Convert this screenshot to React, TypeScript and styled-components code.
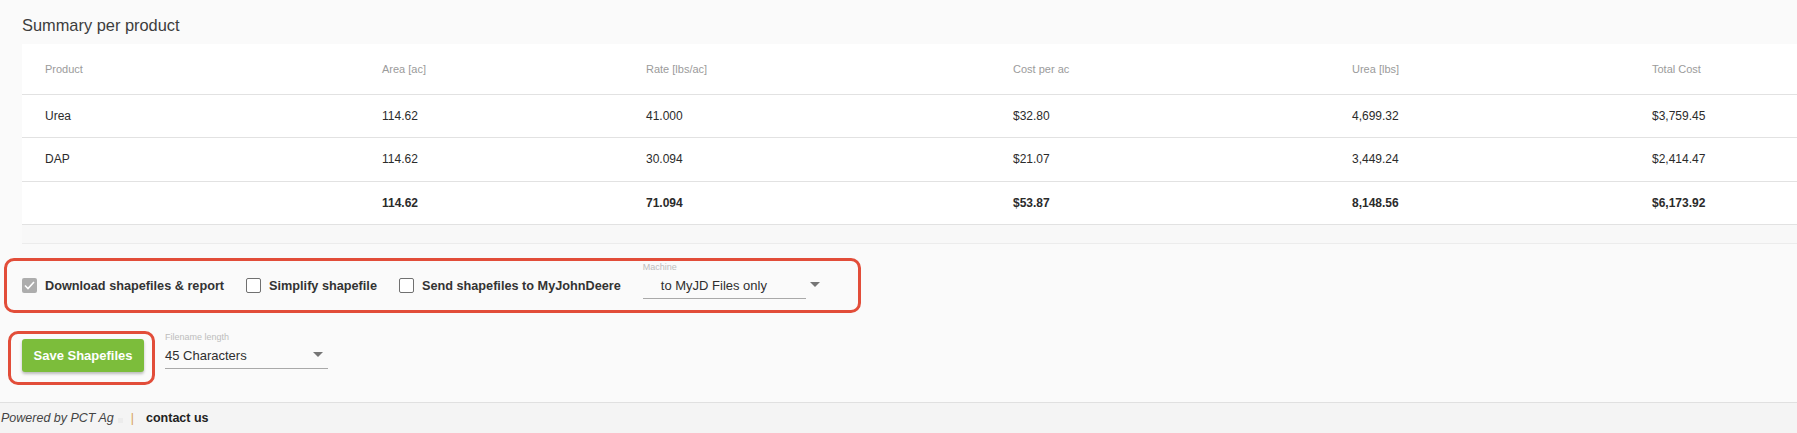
import React from "react";
import styled, { createGlobalStyle } from "styled-components";

interface Row {
  product: string;
  area: string;
  rate: string;
  costPerAc: string;
  urea: string;
  total: string;
}

const rows: Row[] = [
  { product: "Urea", area: "114.62", rate: "41.000", costPerAc: "$32.80", urea: "4,699.32", total: "$3,759.45" },
  { product: "DAP", area: "114.62", rate: "30.094", costPerAc: "$21.07", urea: "3,449.24", total: "$2,414.47" },
];

const totals: Row = {
  product: "",
  area: "114.62",
  rate: "71.094",
  costPerAc: "$53.87",
  urea: "8,148.56",
  total: "$6,173.92",
};

const columns = [
  { label: "Product", width: 337 },
  { label: "Area [ac]", width: 264 },
  { label: "Rate [lbs/ac]", width: 367 },
  { label: "Cost per ac", width: 339 },
  { label: "Urea [lbs]", width: 300 },
  { label: "Total Cost", width: 168 },
];

const GlobalStyle = createGlobalStyle`
  * { box-sizing: border-box; }
  body {
    margin: 0;
    background: #fafafa;
    font-family: "Liberation Sans", Arial, sans-serif;
    color: #333;
  }
`;

const Page = styled.div`
  min-height: 100vh;
  display: flex;
  flex-direction: column;
`;

const Main = styled.main`
  flex: 1;
`;

const Heading = styled.h2`
  margin: 0 0 9px;
  padding: 15px 0 0 22px;
  font-size: 16.4px;
  line-height: 20px;
  font-weight: normal;
  color: #3d3d3d;
`;

const Card = styled.div`
  margin-left: 22px;
  background: #f8f8f8;
  border-bottom: 1px solid #ececec;
  padding-bottom: 18px;
`;

const Table = styled.table`
  width: 100%;
  table-layout: fixed;
  border-collapse: collapse;
  background: #fff;
`;

const HeadCell = styled.th`
  height: 50px;
  padding: 0 0 0 23px;
  text-align: left;
  font-size: 11px;
  font-weight: normal;
  color: #9b9b9b;
  border-bottom: 1px solid #e2e2e2;
`;

const Cell = styled.td<{ $bold?: boolean }>`
  height: 43.5px;
  padding: 0 0 0 23px;
  font-size: 12px;
  color: #2b2b2b;
  font-weight: ${(p) => (p.$bold ? "bold" : "normal")};
  border-bottom: 1px solid #e2e2e2;
`;

const Highlight = styled.div`
  display: inline-flex;
  align-items: center;
  border: 3px solid #e24d39;
  border-radius: 10px;
`;

const OptionsBox = styled(Highlight)`
  margin: 14px 0 0 4px;
  height: 55px;
  padding: 0 52px 0 15px;
  gap: 22px;
`;

const CheckItem = styled.label`
  display: flex;
  align-items: center;
  gap: 8px;
  font-size: 12.7px;
  font-weight: bold;
  color: #333;
`;

const Box = styled.span<{ $checked?: boolean }>`
  width: 15px;
  height: 15px;
  border-radius: 2px;
  display: flex;
  align-items: center;
  justify-content: center;
  background: ${(p) => (p.$checked ? "#adadad" : "#fff")};
  border: ${(p) => (p.$checked ? "none" : "1.5px solid #707070")};
`;

const SelectField = styled.div<{ $width: number }>`
  position: relative;
  width: ${(p) => p.$width}px;
  align-self: flex-start;
  margin-top: 1px;
`;

const SelectLabel = styled.div`
  font-size: 9px;
  line-height: 11px;
  color: #bdbdbd;
`;

const SelectValue = styled.div<{ $indent: number }>`
  margin-top: 5px;
  padding: 0 0 4px ${(p) => p.$indent}px;
  font-size: 13px;
  line-height: 16px;
  color: #2f2f2f;
  border-bottom: 1px solid #a9a9a9;
`;

const Arrow = styled.span<{ $right: number }>`
  position: absolute;
  right: ${(p) => p.$right}px;
  bottom: 12px;
  width: 0;
  height: 0;
  border-left: 5px solid transparent;
  border-right: 5px solid transparent;
  border-top: 5px solid #757575;
`;

const ActionRow = styled.div`
  display: flex;
  align-items: flex-start;
  gap: 10px;
  margin: 18px 0 0 8px;
`;

const ButtonBox = styled(Highlight)`
  padding: 5px 8px 10px 11px;
`;

const SaveButton = styled.button`
  width: 122px;
  height: 33px;
  border: none;
  border-radius: 3px;
  background: #7cbd3b;
  color: #fff;
  font-family: inherit;
  font-size: 13px;
  font-weight: bold;
  box-shadow: 0 2px 3px rgba(0, 0, 0, 0.25);
  cursor: pointer;
`;

const Footer = styled.footer`
  height: 31px;
  display: flex;
  align-items: center;
  padding-left: 1px;
  background: #f4f4f4;
  border-top: 1px solid #e0e0e0;
  font-size: 12.5px;
`;

const Powered = styled.span`
  font-style: italic;
  color: #444;
`;

const Dot = styled.span`
  width: 5px;
  height: 5px;
  margin: 4px 0 0 4px;
  background: #ececec;
`;

const Divider = styled.span`
  margin: 0 12px 0 8px;
  color: #d9a35f;
`;

const Contact = styled.a`
  font-weight: bold;
  color: #222;
  text-decoration: none;
`;

const Check = () => (
  <svg width="11" height="9" viewBox="0 0 11 9">
    <path d="M1 4.5 L4 7.5 L10 1" fill="none" stroke="#fff" strokeWidth="1.6" />
  </svg>
);

const renderRow = (r: Row, bold = false) => (
  <>
    <Cell $bold={bold}>{r.product}</Cell>
    <Cell $bold={bold}>{r.area}</Cell>
    <Cell $bold={bold}>{r.rate}</Cell>
    <Cell $bold={bold}>{r.costPerAc}</Cell>
    <Cell $bold={bold}>{r.urea}</Cell>
    <Cell $bold={bold}>{r.total}</Cell>
  </>
);

export default function App() {
  return (
    <Page>
      <GlobalStyle />
      <Main>
        <Heading>Summary per product</Heading>
        <Card>
          <Table>
            <colgroup>
              {columns.map((c) => (
                <col key={c.label} style={{ width: c.width }} />
              ))}
            </colgroup>
            <thead>
              <tr>
                {columns.map((c) => (
                  <HeadCell key={c.label}>{c.label}</HeadCell>
                ))}
              </tr>
            </thead>
            <tbody>
              {rows.map((r) => (
                <tr key={r.product}>{renderRow(r)}</tr>
              ))}
              <tr>{renderRow(totals, true)}</tr>
            </tbody>
          </Table>
        </Card>

        <OptionsBox>
          <CheckItem>
            <Box $checked>
              <Check />
            </Box>
            Download shapefiles &amp; report
          </CheckItem>
          <CheckItem>
            <Box />
            Simplify shapefile
          </CheckItem>
          <CheckItem>
            <Box />
            Send shapefiles to MyJohnDeere
          </CheckItem>
          <SelectField $width={163}>
            <SelectLabel>Machine</SelectLabel>
            <SelectValue $indent={18}>to MyJD Files only</SelectValue>
            <Arrow $right={-14} />
          </SelectField>
        </OptionsBox>

        <ActionRow>
          <ButtonBox>
            <SaveButton>Save Shapefiles</SaveButton>
          </ButtonBox>
          <SelectField $width={163}>
            <SelectLabel>Filename length</SelectLabel>
            <SelectValue $indent={0}>45 Characters</SelectValue>
            <Arrow $right={5} />
          </SelectField>
        </ActionRow>
      </Main>
      <Footer>
        <Powered>Powered by PCT Ag</Powered>
        <Dot />
        <Divider>|</Divider>
        <Contact href="#">contact us</Contact>
      </Footer>
    </Page>
  );
}
